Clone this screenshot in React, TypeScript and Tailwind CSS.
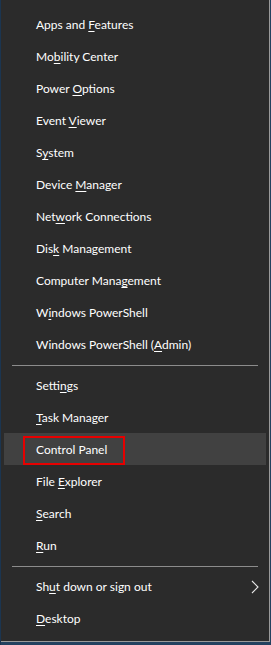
import type { ReactNode } from 'react'

type Item = { label: ReactNode; active?: boolean; submenu?: boolean }

const u = (c: string) => <u className="underline underline-offset-2">{c}</u>

const groups: Item[][] = [
  [
    { label: <>Apps and {u('F')}eatures</> },
    { label: <>Mo{u('b')}ility Center</> },
    { label: <>Power {u('O')}ptions</> },
    { label: <>Event {u('V')}iewer</> },
    { label: <>S{u('y')}stem</> },
    { label: <>Device {u('M')}anager</> },
    { label: <>Net{u('w')}ork Connections</> },
    { label: <>Dis{u('k')} Management</> },
    { label: <>Computer Mana{u('g')}ement</> },
    { label: <>W{u('i')}ndows PowerShell</> },
    { label: <>Windows PowerShell ({u('A')}dmin)</> },
  ],
  [
    { label: <>Setti{u('n')}gs</> },
    { label: <>{u('T')}ask Manager</> },
    { label: <>Control Panel</>, active: true },
    { label: <>File {u('E')}xplorer</> },
    { label: <>{u('S')}earch</> },
    { label: <>{u('R')}un</> },
  ],
  [
    { label: <>Sh{u('u')}t down or sign out</>, submenu: true },
    { label: <>{u('D')}esktop</> },
  ],
]

function Row({ item }: { item: Item }) {
  return (
    <div
      className={`relative flex h-8 items-center pr-3 pt-[2px] ${
        item.active ? 'mx-[3px] bg-[#414141] pl-[32px]' : 'pl-[35px]'
      }`}
    >
      {item.active && (
        <div className="absolute left-[19px] top-[3px] h-[29px] w-[102px] border-2 border-[#e60000]" />
      )}
      <span className="relative">{item.label}</span>
      {item.submenu && (
        <svg
          className="absolute right-[10px] top-[10px]"
          width="8"
          height="14"
          viewBox="0 0 8 14"
          fill="none"
        >
          <path d="M1 1l6 6-6 6" stroke="#e8e8e8" strokeWidth="1.1" />
        </svg>
      )}
    </div>
  )
}

export default function App() {
  return (
    <div className="flex h-[645px] w-[271px] bg-[#23415f]">
      <div className="w-px bg-[#1b3550]" />
      <div
        className="flex h-[642px] w-[269px] flex-col border-r border-b border-[#9a9a9a] bg-[#2b2b2b] pt-2 text-[12px] text-white"
        style={{ fontFamily: '"Segoe UI", Lato, "Noto Sans", sans-serif' }}
      >
        {groups.map((g, gi) => (
          <div key={gi}>
            {gi > 0 && <div className="mx-[11px] mt-[5px] mb-[3px] h-px bg-[#8c8c8c]" />}
            {g.map((it, i) => (
              <Row key={i} item={it} />
            ))}
          </div>
        ))}
      </div>
    </div>
  )
}
